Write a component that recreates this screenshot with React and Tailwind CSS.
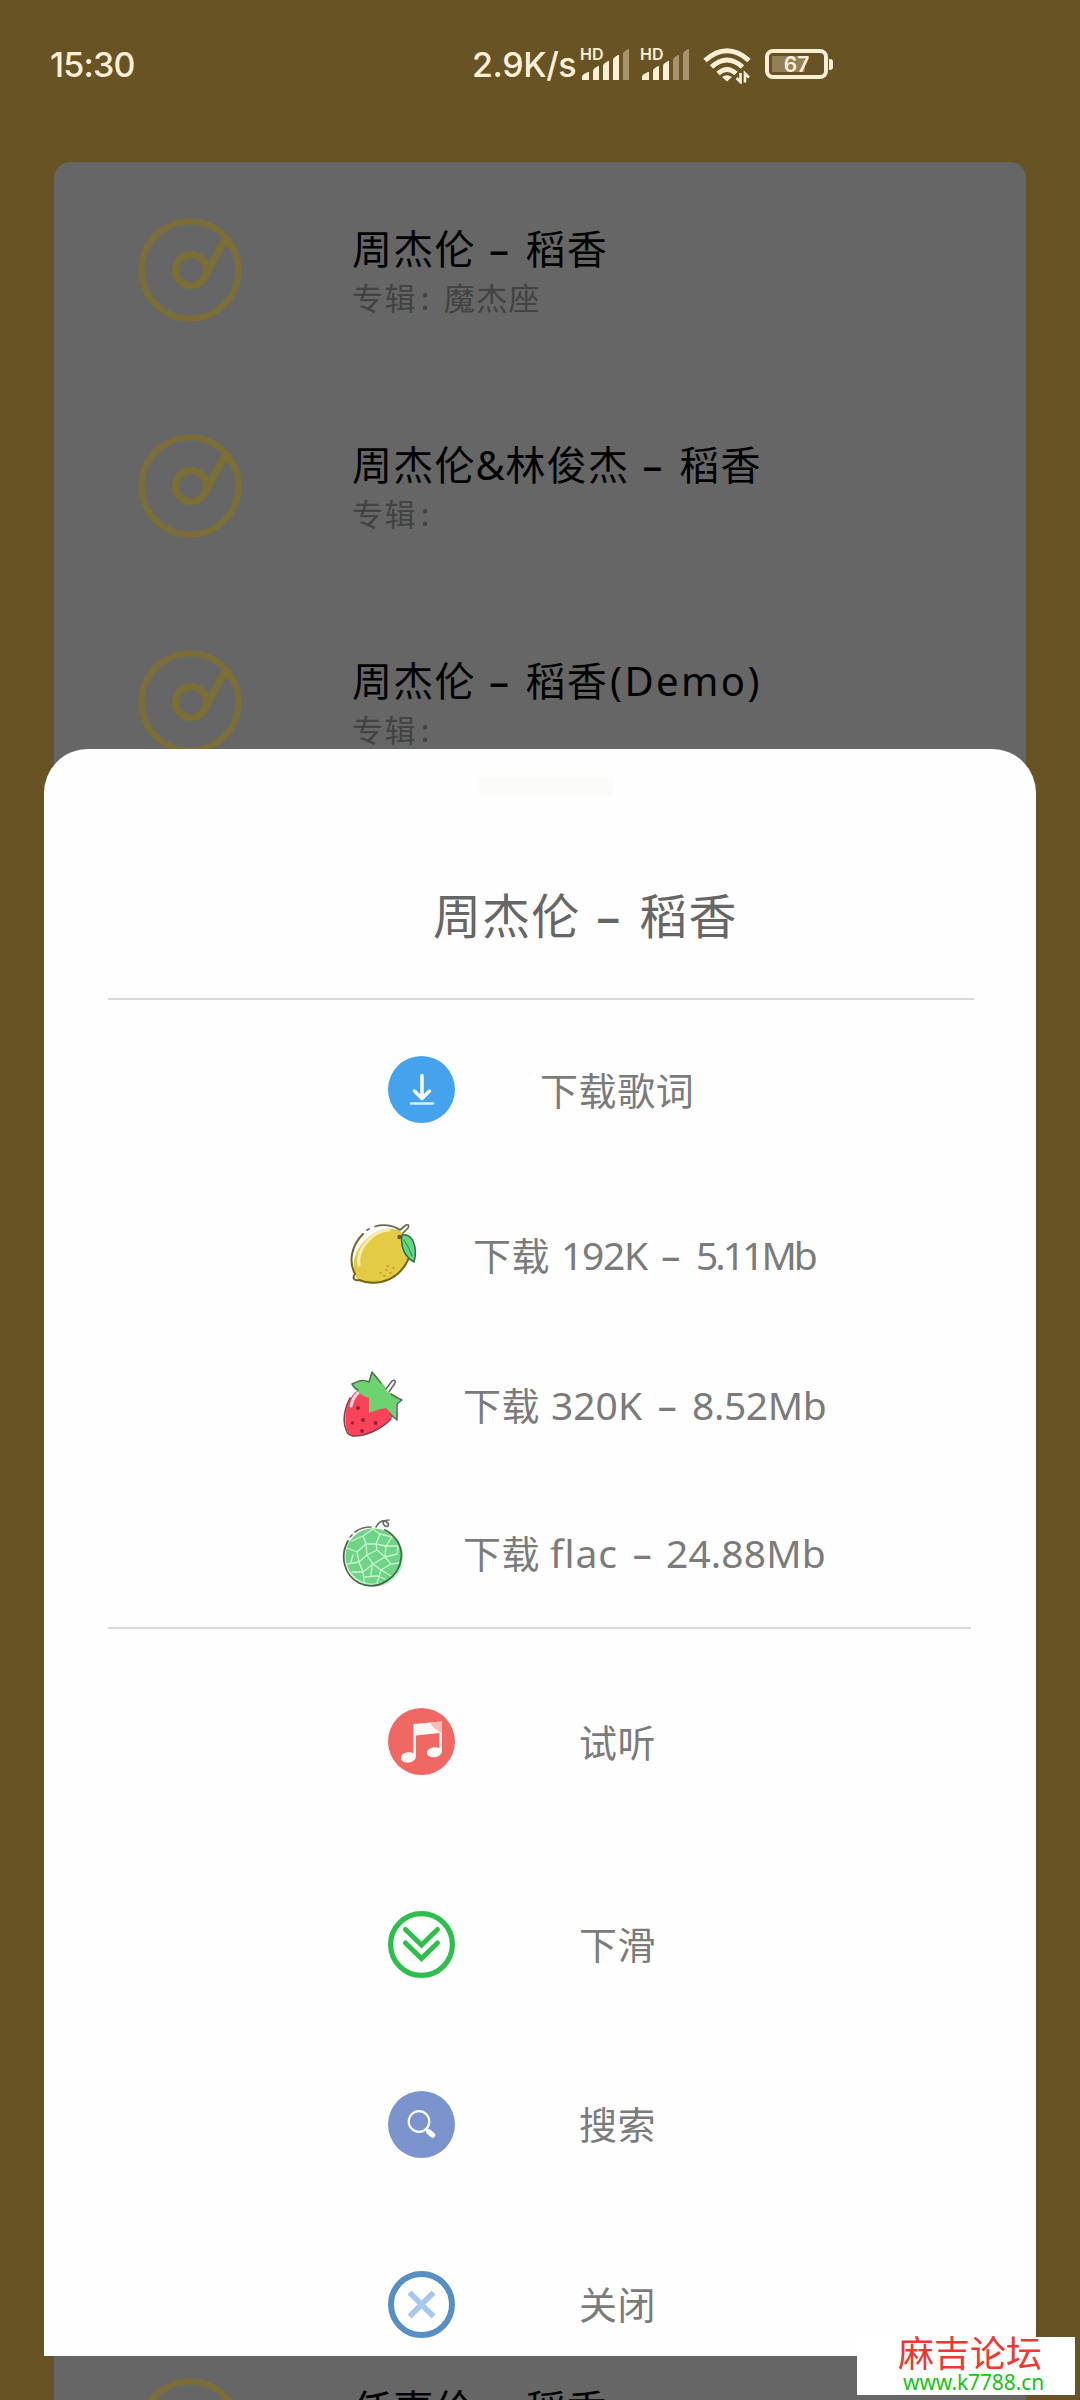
const LATIN = "font-['Noto_Sans','Noto_Sans_CJK_SC',sans-serif]";

function Run({ className = "", children }) {
  return <span className={`inline-block whitespace-nowrap ${className}`}>{children}</span>;
}

function Disc() {
  return (
    <svg className="h-[104px] w-[104px] shrink-0" viewBox="0 0 104 104" fill="none" stroke="#7b6e36" strokeWidth="6">
      <circle cx="52" cy="52" r="48.5" />
      <circle cx="53" cy="52" r="15.5" strokeWidth="7" />
      <path d="M65 62 L86 23 Q90 19 92 29" strokeWidth="7" />
    </svg>
  );
}

function Song({ title, album }) {
  return (
    <div className="flex h-[216px] shrink-0 pl-[84px]">
      <div className="pt-[56px]"><Disc /></div>
      <div className="pt-[66px] pl-[110px]">
        <div className="flex h-[42px] items-center text-[40px] leading-none tracking-[1.2px] text-black">{title}</div>
        <div className="mt-[12px] flex h-[32px] text-[31px] leading-[32px] tracking-[1.4px] text-[#424242]">
          <Run>专辑</Run>
          <Run className="w-[27px] pl-[4px] font-medium">:</Run>
          {album && <Run>{album}</Run>}
        </div>
      </div>
    </div>
  );
}

const Dash = ({ className = "w-[50px]" }) => <Run className={`pr-[2px] text-center font-medium ${className}`}>–</Run>;

const songs = [
  { title: <><Run>周杰伦</Run><Dash /><Run>稻香</Run></>, album: "魔杰座" },
  { title: <><Run>周杰伦</Run><Run className="w-[30px] tracking-normal">&amp;</Run><Run>林俊杰</Run><Dash /><Run>稻香</Run></> },
  { title: <><Run>周杰伦</Run><Dash /><Run>稻香</Run><Run className="pl-[2px] tracking-[2.4px]">(Demo)</Run></> },
];

const lastSong = { title: <><Run>任嘉伦</Run><Dash /><Run>稻香</Run></> };

function Signal({ strength }) {
  const bars = [[2, 24, 8], [13, 18, 7], [23, 13, 7], [33, 7, 7], [43, 1, 7]];
  return (
    <div className="relative h-[34px] w-[60px] shrink-0">
      <svg className="h-[34px] w-[54px]" viewBox="0 0 54 34" fill="#fdeed6">
        {bars.map(([x, y, w], i) => (
          <path key={x} opacity={i < strength ? 1 : 0.42} d={`M${x} 32 V${y + 5} Q${x} ${y + 3} ${x + 2} ${y + 2} L${x + w - 2} ${y} H${x + w - 1} V32 Z`} />
        ))}
      </svg>
      <span className="absolute top-[-2px] left-0 font-['Inter'] text-[16px] leading-[16px] font-semibold text-[#fdeed6]">HD</span>
    </div>
  );
}

function StatusBar() {
  return (
    <div className="flex h-[162px] shrink-0 items-start pt-[48px] pl-[50px] font-['Inter',sans-serif] text-[34px] leading-[34px] font-medium text-[#ffefd9]">
      <div className="w-[422px] tracking-[-0.8px]">15:30</div>
      <div className="w-[108px] tracking-[-0.4px] whitespace-nowrap">2.9K/s</div>
      <Signal strength={4} />
      <Signal strength={3} />
      <svg className="ml-[3px] h-[36px] w-[48px]" viewBox="0 0 48 36" fill="none" stroke="#fdeed6" strokeWidth="5">
        <path d="M2 12.500 Q24 -7 46 12.500" />
        <path d="M8.500 19 Q24 5 39.500 19" />
        <path d="M15 25.500 Q24 17.500 33 25.500" />
        <path d="M19 29 Q24 25.500 29 29 L24 33.500 Z" fill="#fdeed6" stroke="none" />
        <path d="M37.500 25 V34 L33.500 30 M42 34.500 V25.500 L46 29.500" strokeWidth="2.600" />
      </svg>
      <div className="mt-px ml-[14px] flex items-center">
        <div className="relative flex h-[30px] w-[63px] items-center rounded-[8px] border-4 border-[#fdeed6] p-[3px]">
          <div className="h-[16px] w-[33px] bg-[#928057]" />
          <span className="absolute inset-0 text-center text-[21px] leading-[23px] font-semibold">67</span>
        </div>
        <div className="ml-[1px] h-[11px] w-[4px] rounded-r-[3px] bg-[#fdeed6]" />
      </div>
    </div>
  );
}

function DownloadIcon() {
  return (
    <svg className="h-[67px] w-[67px]" viewBox="0 0 67 67" fill="none" stroke="#fff" strokeLinecap="round" strokeLinejoin="round">
      <circle cx="33.500" cy="33.500" r="33.500" fill="#45a3ee" stroke="none" />
      <path d="M34 19.500 V42 M26.500 35 L34 42.500 L41.500 35" strokeWidth="3.400" />
      <path d="M23 47.500 H45" strokeWidth="2.600" stroke="#d5eeff" />
    </svg>
  );
}

function LemonIcon() {
  return (
    <svg className="h-[64px] w-[68px]" viewBox="0 0 68 64" fill="none" strokeLinecap="round" strokeLinejoin="round">
      <path d="M8 56 C3 47 3 34 12 22 C22 9 38 1 51 8 C61 15 63 30 57 42 C49 57 27 66 12 58 Z" fill="#e3cb45" />
      <path d="M10 42 C7 25 25 7 40 7" stroke="#f8ecb0" strokeWidth="3" />
      <path d="M14 11 C3 22 -1 38 6 51 C3 55 5 58 10 57 C27 64 50 58 60 35" stroke="#746525" strokeWidth="2" />
      <path d="M18 7 L20 6 M26 3.500 C34 1 44 2 51 7 L57 2 Q61 1 59 5 L54 10" stroke="#6d6650" strokeWidth="1.700" />
      <circle cx="50.500" cy="14" r="2.200" fill="#75502a" />
      <path d="M53 12 C64 10 69 25 65 39 C56 34 51 24 53 12 Z" fill="#62d681" stroke="#356d43" strokeWidth="1.500" />
      <path d="M55 17 Q60 24 63 33" stroke="#31945b" strokeWidth="1.200" />
      <path d="M31 50 H32 M37 47 H38 M41 50 H42 M38 43 H39 M44 45 H45 M35 53 H36" stroke="#b89524" strokeWidth="1.500" />
    </svg>
  );
}

function StrawberryIcon() {
  return (
    <svg className="h-[68px] w-[64px]" viewBox="0 0 64 68" fill="none" strokeLinecap="round" strokeLinejoin="round">
      <path d="M15 20 C3 28 0 48 4 60 C9 71 29 65 40 56 L54 43 L44 24 L26 17 Z" fill="#f94358" />
      <path d="M7 28 C0 42 0 54 4 62 C10 72 37 61 48 49" stroke="#884047" strokeWidth="1.600" />
      <path d="M8 36 Q10 27 15 23" stroke="#ffd8dd" strokeWidth="3" />
      <path d="M9 14 C17 9 23 9 26 12 L29 2 L38 13 C42 14 43 19 44 22 C49 24 55 28 59 30 L53 34 L54 50 L43 38 L37 39 L26 43 L26 28 C18 26 13 20 9 14 Z" fill="#6cd36e" />
      <path d="M26 12 C20 9 15 11 9 14 Q12 19 15 20 M26 12 L29 2 L38 13 M48 24 Q54 28 59 30 L54 34 L54 50 L47 44" stroke="#52715a" strokeWidth="1.600" />
      <path d="M43 19 L49 11 Q53 9 52 13 L46 22" stroke="#706866" strokeWidth="1.600" />
      <g fill="#8d2637"><circle cx="15" cy="38" r="2" /><circle cx="20" cy="50" r="2" /><circle cx="9.500" cy="53" r="1.700" /><circle cx="32.500" cy="53" r="2" /><circle cx="19" cy="61" r="2" /></g>
    </svg>
  );
}

function MelonIcon() {
  return (
    <svg className="h-[68px] w-[64px]" viewBox="0 0 64 68" fill="none" strokeLinecap="round" strokeLinejoin="round">
      <circle cx="32.500" cy="38.500" r="29" fill="#b8eec0" />
      <circle cx="31" cy="37" r="27.500" fill="#70d488" />
      <path d="M10 22 L21 17 L24 25 L34 25 L38 15 L50 18 M24 25 L15 33 L5 29 M15 33 L17 43 L5 45 M17 43 L25 36 L24 25 M25 36 L35 31 L34 25 L44 27 L50 18 M44 27 L43 38 L35 31 M43 38 L55 35 L56 28 M25 36 L31 45 L43 38 M17 43 L21 53 L31 45 L39 51 L35 64 M21 53 L10 53 M21 53 L22 63 M39 51 L49 45 L43 38 M49 45 L58 44 M39 51 L49 57 M22 58 L35 57 L43 60 M21 17 L31 10 L38 15 M44 27 L57 27 M11 36 L9 43 M30 46 L29 57" stroke="#c9f5cc" strokeWidth="1.300" />
      <path d="M6 22 C-3 38 3 57 17 64 C36 73 57 58 59 40 C61 27 53 16 43 11" stroke="#46674b" strokeWidth="1.800" />
      <path d="M8 18 L10 16 M13 13 C18 9 23 8 29 8" stroke="#746c5b" strokeWidth="1.700" />
      <path d="M34 8 Q38 1 43 2 C49 5 46 9 43 7 C39 3 42 1 47 1" stroke="#64705f" strokeWidth="1.600" />
    </svg>
  );
}

function MusicIcon() {
  return (
    <svg className="h-[67px] w-[67px]" viewBox="0 0 67 67">
      <circle cx="33.500" cy="33.500" r="33.500" fill="#f06863" />
      <path d="M25.500 16 L54 13.500 V43 C54 50 40 52 39 45 C39 40 46 38 51.500 40 V25 L28 27.500 V48 C28 56 13 57 13 50 C13 45 20 43 25.500 45 Z" fill="#fff8f3" />
      <path d="M42 14.500 L54 13.500 V25 Q45 21 42 14.500 Z" fill="#f9bdb8" />
    </svg>
  );
}

function SlideDownIcon() {
  return (
    <svg className="h-[67px] w-[67px]" viewBox="0 0 67 67" fill="none" stroke="#2cbf4b" strokeWidth="5.200" strokeLinecap="round">
      <circle cx="33.500" cy="33.500" r="30.900" />
      <path d="M17.500 18.500 L33.500 34 L49.500 18.500 M17.500 32 L33.500 47.500 L49.500 32" strokeWidth="5" />
    </svg>
  );
}

function SearchIcon() {
  return (
    <svg className="h-[67px] w-[67px]" viewBox="0 0 67 67" fill="none" stroke="#fff" strokeLinecap="round">
      <circle cx="33.500" cy="33.500" r="33.500" fill="#7b94cd" stroke="none" />
      <circle cx="31" cy="30.500" r="10.300" strokeWidth="2.200" />
      <path d="M38 38 L41 41" strokeWidth="2.500" />
      <path d="M41 41 L44.500 44" strokeWidth="5.500" />
    </svg>
  );
}

function CloseIcon() {
  return (
    <svg className="h-[67px] w-[67px]" viewBox="0 0 67 67" fill="none">
      <circle cx="33.500" cy="33.500" r="30.500" stroke="#558fc4" strokeWidth="6" />
      <path d="M21.500 21.500 L45.500 45.500 M45.500 21.500 L21.500 45.500" stroke="#a6c8f0" strokeWidth="5.600" />
    </svg>
  );
}

/* One line of the sheet: a fixed icon slot followed by its label */
function Row({ className, slot, icon, children }) {
  return (
    <div className={`flex shrink-0 items-center text-[38px] leading-none tracking-[0.6px] text-[#7b7b7b] ${className}`}>
      <div className={`shrink-0 ${slot}`}>{icon}</div>
      <div className="flex items-baseline">{children}</div>
    </div>
  );
}

function Sheet() {
  return (
    <div className="absolute top-[749px] left-[44px] flex h-[1607px] w-[992px] flex-col overflow-hidden rounded-t-[44px] bg-[#fefefe] pt-[29px]">
      <div className="ml-[435px] h-[18px] w-[134px] shrink-0 bg-[#fbfbf9]" />
      <div className="flex h-[202px] shrink-0 items-center pt-[37px] pl-[389px] text-[48px] leading-none tracking-[1.1px] text-[#666]">
        <Run>周杰伦</Run><Dash className="w-[59px]" /><Run>稻香</Run>
      </div>
      <div className="ml-[64px] h-[2px] w-[866px] shrink-0 bg-[#d9d9d9]" />
      <Row className="h-[179px] pl-[344px]" slot="w-[152px]" icon={<DownloadIcon />}><Run>下载歌词</Run></Row>
      <Row className="h-[151px] pl-[305px]" slot="w-[124px]" icon={<LemonIcon />}>
        <Run className="w-[88px]">下载</Run>
        <Run className="w-[87px] text-[39px] tracking-[-1.3px]">192K</Run>
        <Dash className="w-[48px]" />
        <Run className="text-[39px] tracking-[-3px]">5.11Mb</Run>
      </Row>
      <Row className="h-[148px] pl-[299px]" slot="w-[120px]" icon={<StrawberryIcon />}>
        <Run className="w-[88px]">下载</Run>
        <Run className="w-[94px] text-[39px] tracking-[0px]">320K</Run>
        <Dash className="w-[47px]" />
        <Run className="text-[39px] tracking-[-0.4px]">8.52Mb</Run>
      </Row>
      <Row className="h-[149px] pl-[298px]" slot="w-[121px]" icon={<MelonIcon />}>
        <Run className="w-[87px]">下载</Run>
        <Run className="w-[71px] text-[39px] tracking-[1px]">flac</Run>
        <Dash className="w-[45px]" />
        <Run className="text-[39px] tracking-[0.1px]">24.88Mb</Run>
      </Row>
      <div className="ml-[64px] h-[2px] w-[863px] shrink-0 bg-[#d9d9d9]" />
      <Row className="h-[225px] pl-[344px]" slot="w-[191px]" icon={<MusicIcon />}><Run>试听</Run></Row>
      <Row className="h-[180px] pl-[344px]" slot="w-[191px]" icon={<SlideDownIcon />}><Run>下滑</Run></Row>
      <Row className="h-[180px] pl-[344px]" slot="w-[191px]" icon={<SearchIcon />}><Run>搜索</Run></Row>
      <Row className="h-[180px] pl-[344px]" slot="w-[191px]" icon={<CloseIcon />}><Run>关闭</Run></Row>
    </div>
  );
}

export default function App() {
  return (
    <div className={`relative flex h-[2400px] w-[1080px] flex-col overflow-hidden bg-[#675323] ${LATIN}`}>
      <StatusBar />
      <div className="ml-[54px] flex w-[972px] flex-1 flex-col overflow-hidden rounded-t-[16px] bg-[#666]">
        {songs.map((song, i) => <Song key={i} {...song} />)}
        <div className="h-[1512px] shrink-0" />
        <Song {...lastSong} />
      </div>
      <Sheet />
      <div className="absolute top-[2337px] left-[857px] flex h-[58px] w-[218px] flex-col bg-white pl-[41px]">
        <div className="h-[34px] text-[36px] leading-[33px] whitespace-nowrap text-[#ee3832]">麻吉论坛</div>
        <div className="ml-[5px] text-[21px] leading-[22px] tracking-[-0.1px] text-[#14c614]">www.k7788.cn</div>
      </div>
    </div>
  );
}
